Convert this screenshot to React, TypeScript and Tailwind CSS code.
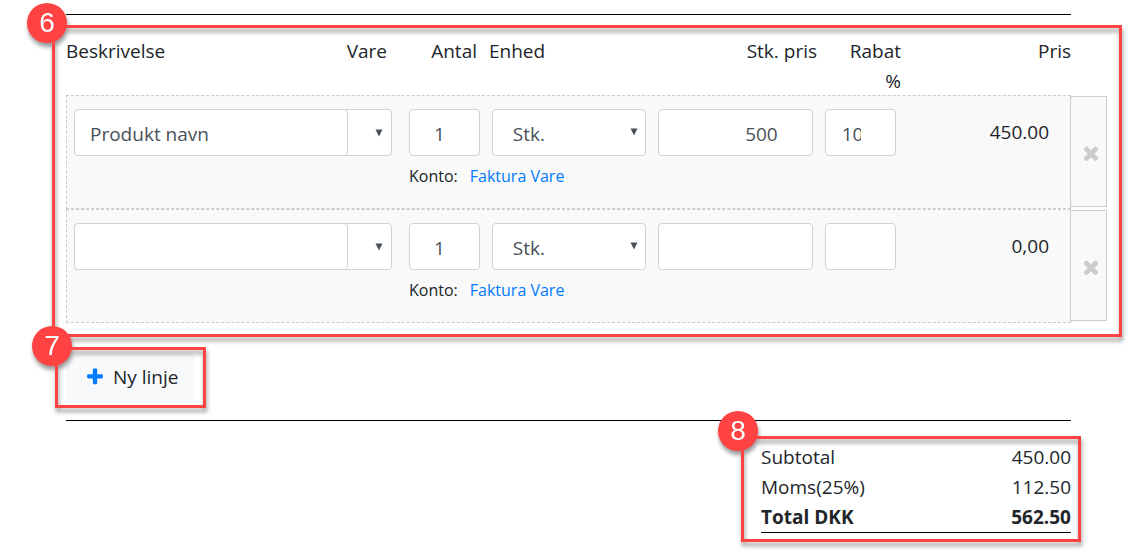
import { useState } from "react";

type Line = {
  id: number;
  name: string;
  quantity: string;
  unitPrice: string;
  discount: string;
  total: string;
};

const initialLines: Line[] = [
  { id: 1, name: "Produkt navn", quantity: "1", unitPrice: "500", discount: "10", total: "450.00" },
  { id: 2, name: "", quantity: "1", unitPrice: "", discount: "", total: "0,00" },
];

const inputClass =
  "block h-[47px] w-full rounded border border-[#ced4da] bg-white pt-0.5 text-[#495057] outline-none focus:border-[#80bdff]";

function PlusIcon() {
  return (
    <svg viewBox="0 0 1792 1792" className="size-5 fill-[#007bff]" aria-hidden="true">
      <path d="M1600 736v192q0 40-28 68t-68 28h-416v416q0 40-28 68t-68 28H800q-40 0-68-28t-28-68v-416H288q-40 0-68-28t-28-68V736q0-40 28-68t68-28h416V224q0-40 28-68t68-28h192q40 0 68 28t28 68v416h416q40 0 68 28t28 68z" />
    </svg>
  );
}

function TimesIcon() {
  return (
    <svg viewBox="0 0 1792 1792" className="size-[22px] fill-[#ccc]" aria-hidden="true">
      <path d="M1490 1322q0 40-28 68l-136 136q-28 28-68 28t-68-28l-294-294-294 294q-28 28-68 28t-68-28l-136-136q-28-28-28-68t28-68l294-294-294-294q-28-28-28-68t28-68l136-136q28-28 68-28t68 28l294 294 294-294q28-28 68-28t68 28l136 136q28 28 28 68t-28 68l-294 294 294 294q28 28 28 68z" />
    </svg>
  );
}

function Arrow() {
  return (
    <svg
      viewBox="0 0 8 8"
      className="pointer-events-none absolute top-[19px] right-2 size-2 fill-[#495057]"
      aria-hidden="true"
    >
      <path d="M0.5 0.5h7L4 7.5z" />
    </svg>
  );
}

// Red frame with a numbered badge, laid over a part of the form
function Callout({ number, className, badgeClass }: { number: number; className: string; badgeClass: string }) {
  return (
    <div
      className={`pointer-events-none absolute z-10 border-3 border-[#ff4343] drop-shadow-[1px_4px_2px_rgba(0,0,0,0.4)] ${className}`}
    >
      <span
        className={`absolute flex size-10 items-center justify-center rounded-full bg-[#ff4343] font-['Liberation_Sans',sans-serif] text-[28px] leading-none text-white ${badgeClass}`}
      >
        {number}
      </span>
    </div>
  );
}

export default function App() {
  const [lines, setLines] = useState<Line[]>(initialLines);

  function update(id: number, field: keyof Line, value: string) {
    setLines(lines.map((l) => (l.id === id ? { ...l, [field]: value } : l)));
  }

  function addLine() {
    setLines([
      ...lines,
      { id: Date.now(), name: "", quantity: "1", unitPrice: "", discount: "", total: "0,00" },
    ]);
  }

  return (
    <main className="bg-white pt-[14px] pr-[68px] pb-5 pl-[66px] font-['Open_Sans',sans-serif] text-[19px] leading-[30px] text-[#212529]">
      <hr className="mb-[21px] border-black" />

      <section className="relative">
        <table className="block">
          <thead className="block">
            <tr className="grid grid-cols-[243fr_66fr_78fr_160fr_156fr_72fr_158fr] gap-x-3 text-right">
              <th className="text-left font-normal">Beskrivelse</th>
              <th className="font-normal">Vare</th>
              <th className="font-normal">Antal</th>
              <th className="text-left font-normal">Enhed</th>
              <th className="font-normal">Stk. pris</th>
              <th className="font-normal">
                Rabat
                <br />%
              </th>
              <th className="font-normal">Pris</th>
            </tr>
          </thead>

          <tbody className="-mt-px block">
            {lines.map((line) => (
              <tr
                key={line.id}
                className="grid grid-cols-[321fr_71fr_155fr_155fr_71fr_151fr_0px] gap-x-3 border border-dashed border-[#ccc] bg-[#f9f9f9] pl-[7px]"
              >
                <td colSpan={2} className="pt-[13px] pr-[5px]">
                  <div className="relative flex h-[47px] rounded border border-[#ced4da] bg-white">
                    <input
                      aria-label="Beskrivelse"
                      className="-m-px h-[47px] min-w-0 flex-1 rounded border border-[#ced4da] bg-white px-[15px] pt-0.5 text-[#495057] outline-none"
                      value={line.name}
                      onChange={(e) => update(line.id, "name", e.target.value)}
                    />
                    <select aria-label="Vare" className="w-11 appearance-none bg-transparent outline-none">
                      <option value=""></option>
                    </select>
                    <Arrow />
                  </div>
                </td>
                <td className="pt-[13px]">
                  <input
                    aria-label="Antal"
                    inputMode="numeric"
                    className={`${inputClass} pr-[34px] pl-4 text-right`}
                    value={line.quantity}
                    onChange={(e) => update(line.id, "quantity", e.target.value)}
                  />
                </td>
                <td className="pt-[13px]">
                  <div className="relative">
                    <select aria-label="Enhed" className={`${inputClass} appearance-none px-5`}>
                      <option>Stk.</option>
                    </select>
                    <Arrow />
                  </div>
                </td>
                <td className="pt-[13px]">
                  <input
                    aria-label="Stk. pris"
                    inputMode="decimal"
                    className={`${inputClass} pr-[34px] pl-4 text-right`}
                    value={line.unitPrice}
                    onChange={(e) => update(line.id, "unitPrice", e.target.value)}
                  />
                </td>
                <td className="pt-[13px]">
                  <input
                    aria-label="Rabat %"
                    inputMode="decimal"
                    className={`${inputClass} pr-[34px] pl-4`}
                    value={line.discount}
                    onChange={(e) => update(line.id, "discount", e.target.value)}
                  />
                </td>
                <td className="pt-[21px] pr-[9px] text-right">{line.total}</td>
                <td className="col-start-7 row-span-2 row-start-1 mb-px w-[37px]">
                  <button
                    type="button"
                    aria-label="Slet linje"
                    onClick={() => setLines(lines.filter((l) => l.id !== line.id))}
                    className="flex size-full items-center justify-center border border-[#ccc] bg-[#f9f9f9] pt-0.5 pl-1"
                  >
                    <TimesIcon />
                  </button>
                </td>
                <td className="col-span-3 col-start-2 row-start-2 pt-2 pb-5 text-base leading-6">
                  Konto:
                  <a href="#konto" className="ml-3 text-[#007bff]">
                    Faktura Vare
                  </a>
                </td>
              </tr>
            ))}
          </tbody>
        </table>
        <Callout
          number={6}
          className="-top-[11px] -right-[51px] -bottom-[14px] -left-[14px]"
          badgeClass="-top-[25px] -left-7"
        />
      </section>

      <div className="relative mt-[31px] w-fit">
        <button
          type="button"
          onClick={addLine}
          className="flex h-[46px] items-center gap-2 rounded bg-[#f8f9fa] pr-[17px] pl-[19px]"
        >
          <PlusIcon />
          Ny linje
        </button>
        <Callout
          number={7}
          className="-top-[7px] -right-[11px] -bottom-2 -left-[11px]"
          badgeClass="-top-6 -left-[26px]"
        />
      </div>

      <hr className="mt-5 mb-[21px] border-black" />

      <section className="relative ml-auto w-[310px]">
        <table className="w-full">
          <tbody>
            <tr>
              <th className="text-left font-normal">Subtotal</th>
              <td className="text-right">450.00</td>
            </tr>
            <tr>
              <th className="text-left font-normal">Moms(25%)</th>
              <td className="text-right">112.50</td>
            </tr>
            <tr className="border-b border-black font-bold">
              <th className="text-left">Total DKK</th>
              <td className="text-right">562.50</td>
            </tr>
          </tbody>
        </table>
        <Callout
          number={8}
          className="-top-[6px] -right-[10px] -bottom-[9px] -left-5"
          badgeClass="-top-7 -left-[26px]"
        />
      </section>
    </main>
  );
}
